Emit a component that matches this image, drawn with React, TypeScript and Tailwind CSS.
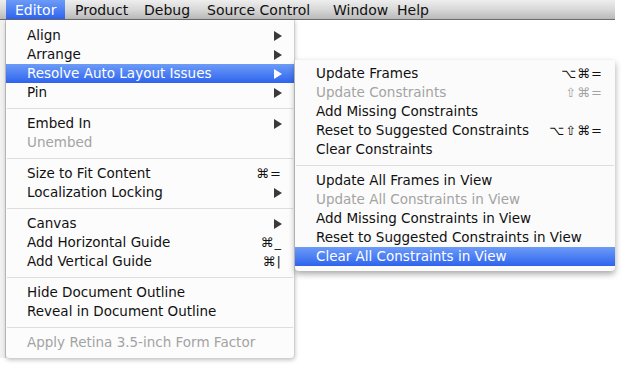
import React from 'react';

type Item =
  | { sep: true }
  | { label: string; arrow?: boolean; key?: string; disabled?: boolean; active?: boolean };

const mainItems: Item[] = [
  { label: 'Align', arrow: true },
  { label: 'Arrange', arrow: true },
  { label: 'Resolve Auto Layout Issues', arrow: true, active: true },
  { label: 'Pin', arrow: true },
  { sep: true },
  { label: 'Embed In', arrow: true },
  { label: 'Unembed', disabled: true },
  { sep: true },
  { label: 'Size to Fit Content', key: '⌘=' },
  { label: 'Localization Locking', arrow: true },
  { sep: true },
  { label: 'Canvas', arrow: true },
  { label: 'Add Horizontal Guide', key: '⌘_' },
  { label: 'Add Vertical Guide', key: '⌘|' },
  { sep: true },
  { label: 'Hide Document Outline' },
  { label: 'Reveal in Document Outline' },
  { sep: true },
  { label: 'Apply Retina 3.5-inch Form Factor', disabled: true },
];

const subItems: Item[] = [
  { label: 'Update Frames', key: '⌥⌘=' },
  { label: 'Update Constraints', key: '⇧⌘=', disabled: true },
  { label: 'Add Missing Constraints' },
  { label: 'Reset to Suggested Constraints', key: '⌥⇧⌘=' },
  { label: 'Clear Constraints' },
  { sep: true },
  { label: 'Update All Frames in View' },
  { label: 'Update All Constraints in View', disabled: true },
  { label: 'Add Missing Constraints in View' },
  { label: 'Reset to Suggested Constraints in View' },
  { label: 'Clear All Constraints in View', active: true },
];

const Arrow = ({ white }: { white?: boolean }) => (
  <svg width="8" height="10" viewBox="0 0 8 10">
    <polygon points="0,0 8,5 0,10" fill={white ? '#ffffff' : '#3a3a3a'} />
  </svg>
);

const MenuRows = ({ items }: { items: Item[] }) => (
  <>
    {items.map((it, i) =>
      'sep' in it ? (
        <div key={i} className="h-[12px] flex items-center px-[1px]">
          <div className="h-px w-full bg-[#dedede]" />
        </div>
      ) : (
        <div
          key={i}
          className={`h-[19px] flex items-center justify-between pl-[21px] pr-[12px] ${
            it.active
              ? 'bg-gradient-to-b from-[#6d9bf7] to-[#2f63ee] text-white'
              : it.disabled
              ? 'text-[#a3a3a3]'
              : 'text-[#111]'
          }`}
        >
          <span>{it.label}</span>
          {it.arrow ? (
            <Arrow white={it.active} />
          ) : it.key ? (
            <span className="tracking-[1px] text-[13px]">{it.key}</span>
          ) : null}
        </div>
      )
    )}
  </>
);

export default function App() {
  return (
    <div
      className="relative w-[640px] h-[371px] bg-white overflow-hidden text-[13.5px] leading-none"
      style={{ fontFamily: '"DejaVu Sans", "Lucida Grande", sans-serif' }}
    >
      {/* menu bar */}
      <div className="flex h-[20px] w-[615px] items-stretch bg-gradient-to-b from-[#eeeeee] via-[#d8d8d8] to-[#b9b9b9] border-b border-[#6b6b6b] text-[14px] text-[#111]">
        <div className="ml-[6px] w-[59px] pl-[9px] flex items-center bg-gradient-to-b from-[#6d9bf7] to-[#2f63ee] text-white">
          Editor
        </div>
        <div className="w-[69px] pl-[10px] flex items-center">Product</div>
        <div className="w-[63px] pl-[10px] flex items-center">Debug</div>
        <div className="w-[126px] pl-[10px] flex items-center">Source Control</div>
        <div className="w-[64px] pl-[10px] flex items-center">Window</div>
        <div className="pl-[10px] flex items-center">Help</div>
      </div>

      <div className="flex">
        {/* background strip left */}
        <div className="w-[6px] h-[338px] bg-[#f1f1f1] border-r border-[#c9c9c9]" />
        {/* main menu */}
        <div className="w-[289px] pt-[6px] pb-[6px] bg-[#fcfcfc] rounded-b-[4px] border-r border-[#d0d0d0] shadow-[0_2px_4px_rgba(0,0,0,0.25)]">
          <MenuRows items={mainItems} />
        </div>
      </div>

      {/* submenu */}
      <div className="absolute left-[295px] top-[60px] w-[320px] pt-[4px] pb-[5px] bg-[#fbfbfb] rounded-b-[4px] shadow-[0_3px_6px_rgba(0,0,0,0.35)]">
        <MenuRows items={subItems} />
      </div>
    </div>
  );
}
